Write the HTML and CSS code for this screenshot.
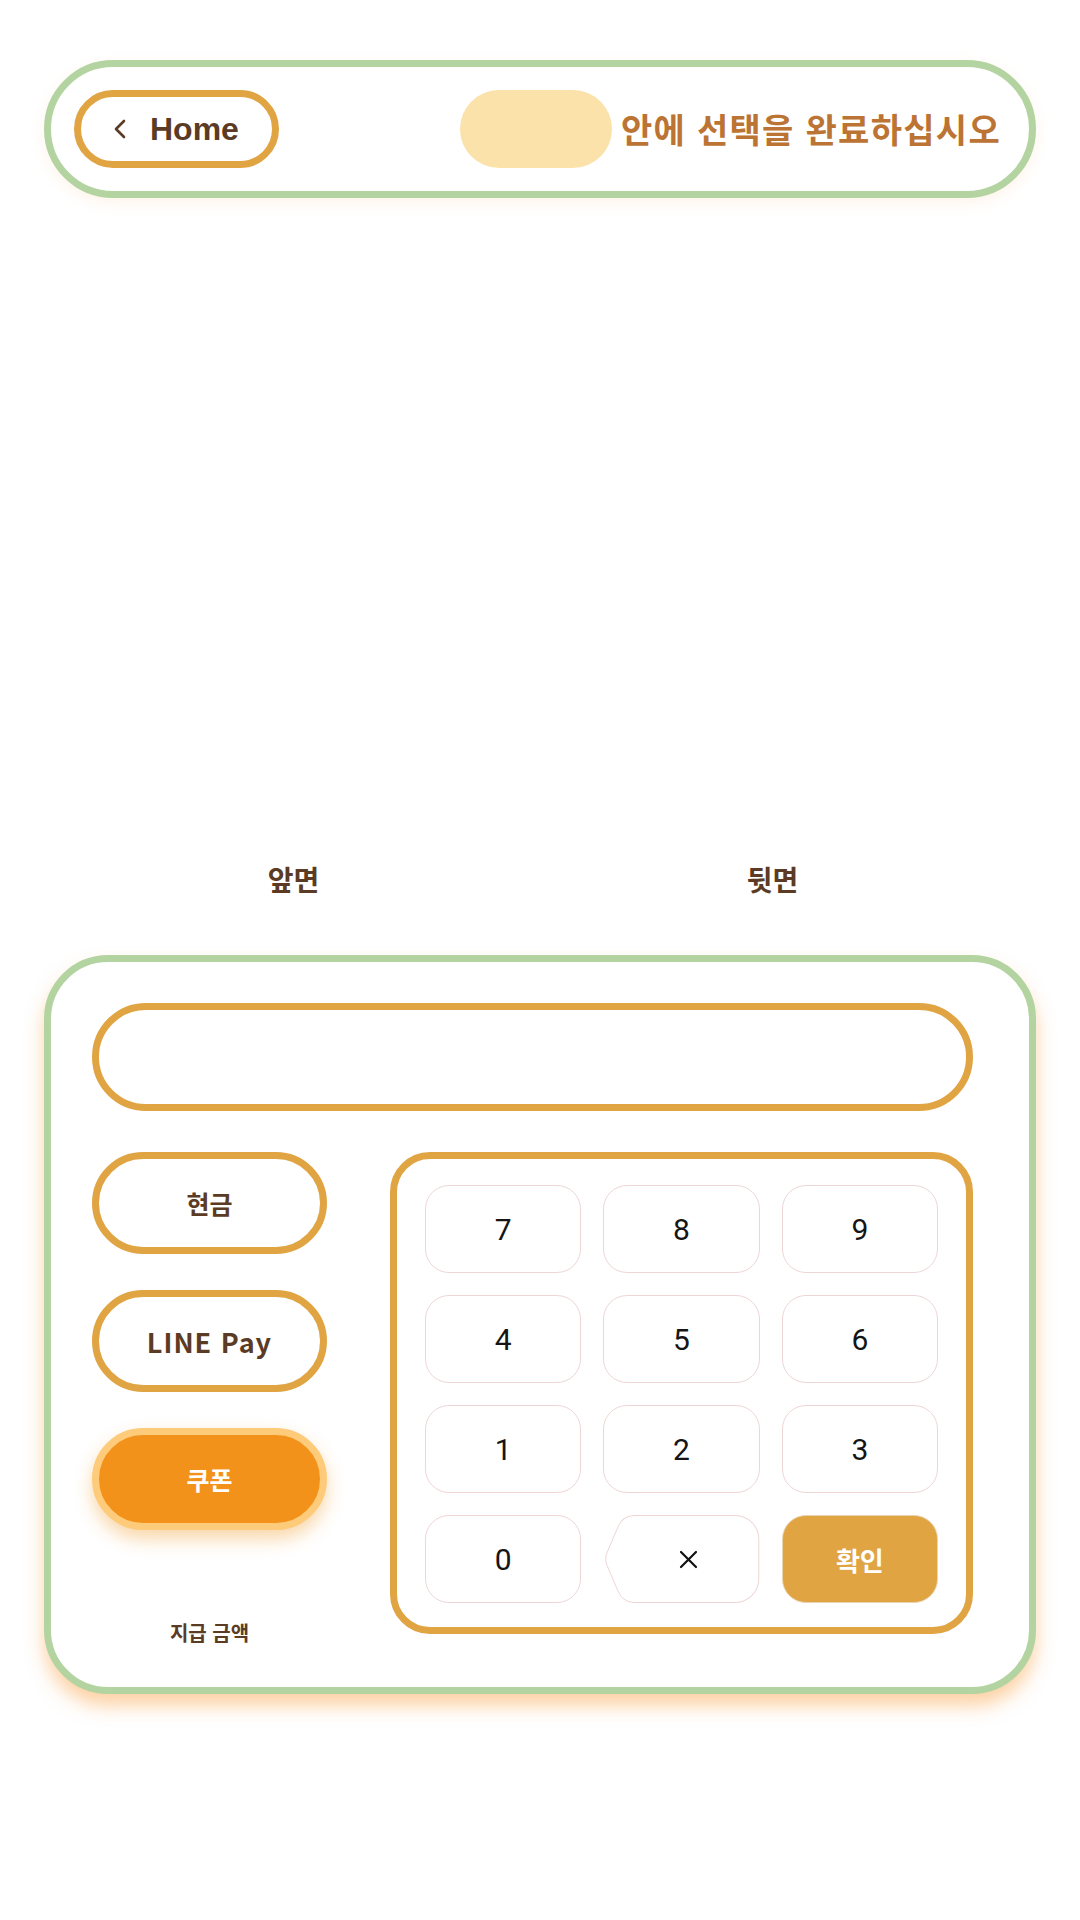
FILE: index.html
```html
<!DOCTYPE html>
<html lang="ko">
<head>
<meta charset="utf-8">
<title>결제</title>
<link rel="stylesheet" href="styles.css">
</head>
<body>
<div class="app">
  <header class="topbar">
    <button class="home-btn" type="button">
      <svg class="chev" width="14" height="20" viewBox="0 0 14 20" aria-hidden="true"><path d="M11 2 L3 10 L11 18" fill="none" stroke="#5b3b24" stroke-width="2.6" stroke-linecap="round" stroke-linejoin="round"/></svg>
      <span>Home</span>
    </button>
    <div class="title-group">
      <span class="title-pill"></span>
      <h1 class="title">안에 선택을 완료하십시오</h1>
    </div>
  </header>

  <section class="preview">
    <div class="face">
      <div class="face-img"></div>
      <p class="face-label">앞면</p>
    </div>
    <div class="face">
      <div class="face-img"></div>
      <p class="face-label">뒷면</p>
    </div>
  </section>

  <section class="pay-card">
    <div class="amount-display"></div>
    <div class="pay-body">
      <div class="methods">
        <button class="method" type="button">현금</button>
        <button class="method method-latin" type="button">LINE Pay</button>
        <button class="method active" type="button">쿠폰</button>
        <p class="amount-label">지급 금액</p>
      </div>
      <div class="keypad">
        <button class="key" type="button">7</button>
        <button class="key" type="button">8</button>
        <button class="key" type="button">9</button>
        <button class="key" type="button">4</button>
        <button class="key" type="button">5</button>
        <button class="key" type="button">6</button>
        <button class="key" type="button">1</button>
        <button class="key" type="button">2</button>
        <button class="key" type="button">3</button>
        <button class="key" type="button">0</button>
        <button class="key key-back" type="button" aria-label="지우기">
          <svg class="back-shape" viewBox="0 0 156 89" preserveAspectRatio="none" aria-hidden="true"><path d="M31 0.5 H131.5 A24 24 0 0 1 155.5 24.5 V64.5 A24 24 0 0 1 131.5 88.5 H31 Q20 88.5 15 77 L4 51 Q1.5 44.5 4 38 L15 12 Q20 0.5 31 0.5 Z" fill="#fff" stroke="#efd6d6" stroke-width="1"/></svg>
          <svg class="back-x" width="19" height="19" viewBox="0 0 19 19" aria-hidden="true"><path d="M2 2 L17 17 M17 2 L2 17" stroke="#111" stroke-width="2.2" stroke-linecap="round"/></svg>
        </button>
        <button class="key key-ok" type="button">확인</button>
      </div>
    </div>
  </section>
</div>
</body>
</html>
```

FILE: styles.css
```css
* { box-sizing: border-box; }

body {
  margin: 0;
  background: #ffffff;
  font-family: "Noto Sans CJK KR", "Noto Sans", sans-serif;
}

.app {
  padding: 60px 44px 80px;
}

/* top bar */
.topbar {
  height: 138px;
  border: 7px solid #b3d4a0;
  border-radius: 69px;
  background: #fff;
  display: flex;
  align-items: center;
  justify-content: space-between;
  padding: 0 28px 0 23px;
  box-shadow: 0 5px 14px rgba(250, 205, 160, 0.22);
}

.home-btn {
  width: 205px;
  height: 78px;
  border: 7px solid #e0a443;
  border-radius: 39px;
  background: #fff;
  display: flex;
  align-items: center;
  gap: 23px;
  padding: 0 0 0 32px;
  font-family: "Liberation Sans", Arial, sans-serif;
  font-weight: 700;
  font-size: 32px;
  color: #5b3b24;
  cursor: pointer;
}

.chev { display: block; flex-shrink: 0; }

.title-group {
  display: flex;
  align-items: center;
  gap: 9px;
}

.title-pill {
  display: block;
  width: 152px;
  height: 78px;
  border-radius: 39px;
  background: #fae2aa;
}

.title {
  margin: 0;
  font-size: 34px;
  letter-spacing: 1.3px;
  font-weight: 700;
  line-height: 1;
  color: #bb7433;
  white-space: nowrap;
}

/* preview faces */
.preview {
  display: grid;
  grid-template-columns: 479px 479px;
  padding-left: 10px;
}

.face-img { height: 663px; }

.face-label {
  margin: 0;
  text-align: center;
  font-size: 28px;
  line-height: 36px;
  font-weight: 700;
  color: #5b3b24;
}

/* payment card */
.pay-card {
  margin-top: 58px;
  border: 7px solid #b3d4a0;
  border-radius: 64px;
  background: #fff;
  padding: 41px 56px 40px 41px;
  box-shadow: 0 12px 18px rgba(252, 168, 80, 0.5);
}

.amount-display {
  height: 108px;
  border: 7px solid #e0a443;
  border-radius: 54px;
  background: #fff;
}

.pay-body {
  margin-top: 41px;
  display: flex;
  align-items: flex-start;
  gap: 63px;
}

.methods {
  width: 235px;
  flex-shrink: 0;
  display: flex;
  flex-direction: column;
  gap: 36px;
}

.method {
  height: 102px;
  border: 7px solid #e0a443;
  border-radius: 51px;
  background: #fff;
  font-family: "Noto Sans CJK KR", "Noto Sans", sans-serif;
  font-size: 25px;
  font-weight: 700;
  color: #5b3b24;
  cursor: pointer;
}

.method-latin {
  font-size: 27px;
  letter-spacing: 1px;
}

.method.active {
  background: #f2921b;
  border-color: #fdcb7a;
  color: #fff;
  box-shadow: 0 9px 18px rgba(240, 160, 50, 0.42);
}

.amount-label {
  margin: 53px 0 0;
  text-align: center;
  font-size: 20px;
  line-height: 28px;
  font-weight: 700;
  color: #5b3b24;
}

/* keypad */
.keypad {
  flex: 1;
  height: 482px;
  border: 7px solid #e0a443;
  border-radius: 40px;
  padding: 26px 28px 24px;
  display: grid;
  grid-template-columns: repeat(3, 1fr);
  grid-template-rows: repeat(4, 88px);
  gap: 22px;
}

.key {
  border: 1px solid #efd6d6;
  border-radius: 24px;
  background: #fff;
  font-family: Roboto, "Noto Sans", sans-serif;
  font-size: 30px;
  color: #151515;
  cursor: pointer;
  padding: 0;
}

.key-back {
  position: relative;
  border: none;
  background: transparent;
  display: flex;
  align-items: center;
  justify-content: center;
  padding-left: 14px;
}

.back-shape {
  position: absolute;
  inset: 0;
  width: 100%;
  height: 100%;
}

.back-x {
  position: relative;
  display: block;
}

.key-ok {
  background: #e0a443;
  border-color: #ead3b0;
  color: #fff;
  font-family: "Noto Sans CJK KR", "Noto Sans", sans-serif;
  font-weight: 700;
  font-size: 26px;
}
```
